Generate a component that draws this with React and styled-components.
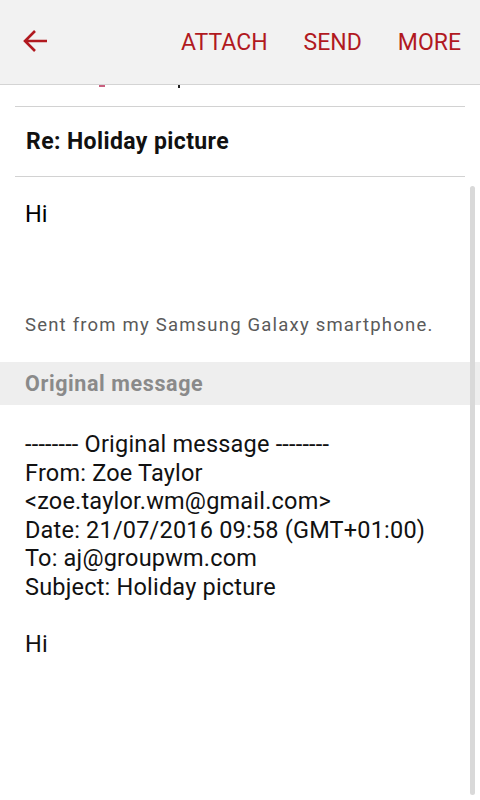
import React from "react";
import styled, { createGlobalStyle } from "styled-components";

const GlobalStyle = createGlobalStyle`
  html, body {
    margin: 0;
    padding: 0;
    background: #ffffff;
  }
  body {
    font-family: Roboto, "Liberation Sans", sans-serif;
    color: #000;
  }
`;

const quoted = [
  "-------- Original message --------",
  "From: Zoe Taylor",
  "<zoe.taylor.wm@gmail.com>",
  "Date: 21/07/2016 09:58 (GMT+01:00)",
  "To: aj@groupwm.com",
  "Subject: Holiday picture",
  "",
  "Hi",
];

export default function App() {
  return (
    <Screen>
      <GlobalStyle />
      <TopBar>
        <BackButton aria-label="Back">
          <svg width="26" height="24" viewBox="0 0 26 24">
            <path
              d="M24 12H3M12 2L2 12l10 10"
              fill="none"
              stroke="#b1191f"
              strokeWidth="2.6"
            />
          </svg>
        </BackButton>
        <Actions>
          <ActionButton>ATTACH</ActionButton>
          <ActionButton>SEND</ActionButton>
          <ActionButton>MORE</ActionButton>
        </Actions>
      </TopBar>

      <Body>
        <ScrollTrack />
        <ClippedRow>
          <Chip />
          <Descender />
        </ClippedRow>
        <Divider />
        <Subject>Re: Holiday picture</Subject>
        <Divider />
        <Compose>
          <Greeting>Hi</Greeting>
          <Signature>Sent from my Samsung Galaxy smartphone.</Signature>
        </Compose>
        <SectionBar>Original message</SectionBar>
        <Quote>
          {quoted.map((line, i) => (
            <QuoteLine key={i}>{line || "\u00a0"}</QuoteLine>
          ))}
        </Quote>
      </Body>
    </Screen>
  );
}

const Screen = styled.div`
  width: 480px;
  height: 800px;
  overflow: hidden;
  display: flex;
  flex-direction: column;
  background: #fff;
`;

const TopBar = styled.header`
  height: 84px;
  flex-shrink: 0;
  display: flex;
  align-items: center;
  justify-content: space-between;
  padding: 0 19px 0 23px;
  background: #f2f2f2;
  border-bottom: 1px solid #d4d4d4;
  position: relative;
  z-index: 2;
`;

const BackButton = styled.button`
  border: none;
  background: none;
  padding: 0;
  margin-top: -2px;
  display: flex;
  cursor: pointer;
`;

const Actions = styled.div`
  display: flex;
  align-items: center;
  gap: 36px;
`;

const ActionButton = styled.button`
  border: none;
  background: none;
  padding: 0;
  font-family: Roboto, "Liberation Sans", sans-serif;
  font-size: 23px;
  color: #b1191f;
  cursor: pointer;
`;

const Body = styled.main`
  flex: 1;
  position: relative;
`;

const ScrollTrack = styled.div`
  position: absolute;
  right: 5px;
  top: 101px;
  bottom: 5px;
  width: 5px;
  border-radius: 3px;
  background: #d9d9d9;
  z-index: 1;
`;

const ClippedRow = styled.div`
  height: 21px;
  margin: 0 15px;
  position: relative;
`;

const Chip = styled.span`
  position: absolute;
  left: 84px;
  top: 0;
  width: 6px;
  height: 2px;
  background: #c9607f;
`;

const Descender = styled.span`
  position: absolute;
  left: 163px;
  top: 0;
  width: 2px;
  height: 3px;
  background: #222;
`;

const Divider = styled.hr`
  margin: 0 15px;
  border: none;
  border-top: 1px solid #d2d2d2;
`;

const Subject = styled.div`
  height: 69px;
  display: flex;
  align-items: center;
  padding: 0 26px;
  font-size: 23px;
  letter-spacing: 0.4px;
  font-weight: 700;
  color: #111;
`;

const Compose = styled.div`
  padding: 23px 25px 0;
  height: 185px;
  box-sizing: border-box;
`;

const Greeting = styled.div`
  font-size: 23.5px;
  line-height: 28px;
`;

const Signature = styled.div`
  margin-top: 86px;
  font-size: 18.5px;
  letter-spacing: 1.2px;
  color: #5a5a5a;
`;

const SectionBar = styled.div`
  height: 43px;
  display: flex;
  align-items: center;
  padding: 0 25px;
  background: #eeeeee;
  font-size: 21.5px;
  letter-spacing: 0.6px;
  font-weight: 700;
  color: #8a8a8a;
`;

const Quote = styled.div`
  padding: 25px 25px 0;
`;

const QuoteLine = styled.div`
  font-size: 23.5px;
  letter-spacing: 0.2px;
  line-height: 28.6px;
  color: #111;
  white-space: pre;
`;
